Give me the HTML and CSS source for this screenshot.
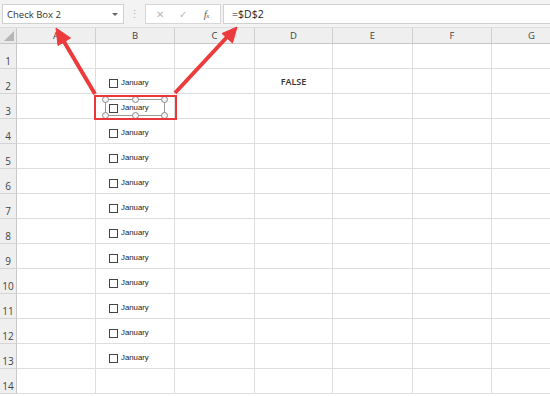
FILE: index.html
```html
<!DOCTYPE html>
<html>
<head>
<meta charset="utf-8">
<link rel="stylesheet" href="styles.css">
</head>
<body>
<div class="app">
  <div class="toolbar">
    <div class="namebox"><span>Check Box 2</span><span class="caret"></span></div>
    <div class="sep">⋮</div>
    <div class="fxbox"><span class="fxb">✕</span><span class="fxb">✓</span><span class="fxb fx">f<span class="fxs">x</span></span></div>
    <div class="formula">=$D$2</div>
  </div>
  <div class="grid">
    <div class="corner"><span class="tri"></span></div>
    <div class="ch">A</div><div class="ch">B</div><div class="ch">C</div><div class="ch">D</div><div class="ch">E</div><div class="ch">F</div><div class="ch last">G</div>

    <div class="rh">1</div><div class="c"></div><div class="c"></div><div class="c"></div><div class="c"></div><div class="c"></div><div class="c"></div><div class="c"></div>
    <div class="rh">2</div><div class="c"></div><div class="c cb"><span class="box"></span>January</div><div class="c"></div><div class="c val">FALSE</div><div class="c"></div><div class="c"></div><div class="c"></div>
    <div class="rh">3</div><div class="c"></div><div class="c cb sel"><span class="box"></span>January</div><div class="c"></div><div class="c"></div><div class="c"></div><div class="c"></div><div class="c"></div>
    <div class="rh">4</div><div class="c"></div><div class="c cb"><span class="box"></span>January</div><div class="c"></div><div class="c"></div><div class="c"></div><div class="c"></div><div class="c"></div>
    <div class="rh">5</div><div class="c"></div><div class="c cb"><span class="box"></span>January</div><div class="c"></div><div class="c"></div><div class="c"></div><div class="c"></div><div class="c"></div>
    <div class="rh">6</div><div class="c"></div><div class="c cb"><span class="box"></span>January</div><div class="c"></div><div class="c"></div><div class="c"></div><div class="c"></div><div class="c"></div>
    <div class="rh">7</div><div class="c"></div><div class="c cb"><span class="box"></span>January</div><div class="c"></div><div class="c"></div><div class="c"></div><div class="c"></div><div class="c"></div>
    <div class="rh">8</div><div class="c"></div><div class="c cb"><span class="box"></span>January</div><div class="c"></div><div class="c"></div><div class="c"></div><div class="c"></div><div class="c"></div>
    <div class="rh">9</div><div class="c"></div><div class="c cb"><span class="box"></span>January</div><div class="c"></div><div class="c"></div><div class="c"></div><div class="c"></div><div class="c"></div>
    <div class="rh">10</div><div class="c"></div><div class="c cb"><span class="box"></span>January</div><div class="c"></div><div class="c"></div><div class="c"></div><div class="c"></div><div class="c"></div>
    <div class="rh">11</div><div class="c"></div><div class="c cb"><span class="box"></span>January</div><div class="c"></div><div class="c"></div><div class="c"></div><div class="c"></div><div class="c"></div>
    <div class="rh">12</div><div class="c"></div><div class="c cb"><span class="box"></span>January</div><div class="c"></div><div class="c"></div><div class="c"></div><div class="c"></div><div class="c"></div>
    <div class="rh">13</div><div class="c"></div><div class="c cb"><span class="box"></span>January</div><div class="c"></div><div class="c"></div><div class="c"></div><div class="c"></div><div class="c"></div>
    <div class="rh">14</div><div class="c"></div><div class="c"></div><div class="c"></div><div class="c"></div><div class="c"></div><div class="c"></div><div class="c"></div>
  </div>

  <div class="selframe">
    <span class="h h1"></span><span class="h h2"></span><span class="h h3"></span>
    <span class="h h4"></span><span class="h h5"></span><span class="h h6"></span>
  </div>
  <div class="redbox"></div>

  <svg class="arrows" width="550" height="396" viewBox="0 0 550 396">
    <g fill="#ec3b3d" stroke="#ec3b3d">
      <line x1="95" y1="94" x2="63" y2="40" stroke-width="4"/>
      <polygon points="56,28 70.5,38 58,45.5" stroke-width="1"/>
      <line x1="175" y1="93" x2="228" y2="36" stroke-width="4"/>
      <polygon points="237,27 232.5,43 222,33.5" stroke-width="1"/>
    </g>
  </svg>
</div>
</body>
</html>
```

FILE: styles.css
```css
* { box-sizing: border-box; }
html, body { margin: 0; padding: 0; background: #fff; }
.app {
  position: relative;
  width: 550px;
  height: 396px;
  overflow: hidden;
  font-family: "Open Sans", "Noto Sans", sans-serif;
  color: #333;
}
.toolbar {
  height: 28px;
  background: #f3f3f3;
  display: flex;
  align-items: flex-start;
  padding-top: 4px;
  border-bottom: 1px solid #dcdcdc;
}
.namebox {
  margin-left: 2px;
  width: 122px;
  height: 20px;
  background: #fff;
  border: 1px solid #d0d0d0;
  display: flex;
  align-items: center;
  justify-content: space-between;
  padding: 0 5px 0 4px;
  font-size: 9.5px;
  color: #333;
}
.caret {
  width: 0; height: 0;
  border-left: 3px solid transparent;
  border-right: 3px solid transparent;
  border-top: 3px solid #666;
}
.sep {
  width: 21px;
  text-align: center;
  color: #b0b0b0;
  font-size: 11px;
  line-height: 20px;
}
.fxbox {
  width: 76px;
  height: 20px;
  background: #fff;
  border: 1px solid #d6d6d6;
  display: flex;
  align-items: center;
  justify-content: space-around;
  padding: 0 2px;
  color: #b8b8b8;
  font-size: 10px;
}
.fxb { width: 20px; text-align: center; }
.fx {
  color: #666;
  font-family: "Liberation Serif", serif;
  font-style: italic;
  font-size: 11px;
  letter-spacing: -0.5px;
}
.fxs { font-size: 7px; }
.formula {
  margin-left: 2px;
  flex: 1;
  height: 20px;
  background: #fff;
  border: 1px solid #d0d0d0;
  border-right: none;
  padding-left: 8px;
  font-size: 10.5px;
  line-height: 18px;
  color: #222;
}
.grid {
  display: grid;
  grid-template-columns: 17px 79px 79px 80px 78px 80px 79px 80px;
  grid-template-rows: 16px repeat(14, 25px);
}
.corner {
  background: #e9e9e9;
  border-right: 1px solid #c8c8c8;
  border-bottom: 1px solid #c8c8c8;
  position: relative;
}
.tri {
  position: absolute;
  right: 2px;
  bottom: 2px;
  width: 0; height: 0;
  border-left: 10px solid transparent;
  border-bottom: 10px solid #b5b5b5;
}
.ch {
  background: #efefef;
  border-right: 1px solid #cfcfcf;
  border-bottom: 1px solid #c8c8c8;
  display: flex;
  align-items: center;
  justify-content: center;
  font-size: 9.5px;
  color: #444;
}
.rh {
  background: #efefef;
  border-right: 1px solid #c8c8c8;
  border-bottom: 1px solid #d5d5d5;
  display: flex;
  align-items: flex-end;
  justify-content: center;
  padding-bottom: 0;
  font-size: 10px;
  line-height: 13px;
  color: #444;
}
.c {
  border-right: 1px solid #dedede;
  border-bottom: 1px solid #dedede;
}
.cb {
  display: flex;
  align-items: flex-start;
  padding: 9px 0 0 13px;
  font-family: "Liberation Sans", sans-serif;
  font-size: 7.8px;
  line-height: 10px;
  color: #222;
}
.box {
  width: 9px;
  height: 9px;
  border: 1px solid #444;
  margin-right: 3px;
  margin-top: 0.5px;
  flex: none;
}
.val {
  display: flex;
  align-items: flex-end;
  justify-content: center;
  padding-bottom: 5px;
  font-size: 9px;
  font-weight: 600;
  color: #333;
}
.selframe {
  position: absolute;
  left: 105px;
  top: 99px;
  width: 60px;
  height: 17px;
  border: 1px solid #9a9a9a;
}
.h {
  position: absolute;
  width: 7px;
  height: 7px;
  border: 1px solid #8a8a8a;
  border-radius: 50%;
  background: #f4f4f4;
}
.h1 { left: -4px; top: -4px; }
.h2 { left: 26px; top: -4px; }
.h3 { right: -4px; top: -4px; }
.h4 { left: -4px; bottom: -4px; }
.h5 { left: 26px; bottom: -4px; }
.h6 { right: -4px; bottom: -4px; }
.redbox {
  position: absolute;
  left: 94px;
  top: 95px;
  width: 83px;
  height: 25px;
  border: 2px solid #e8383c;
}
.arrows {
  position: absolute;
  left: 0;
  top: 0;
}
```
